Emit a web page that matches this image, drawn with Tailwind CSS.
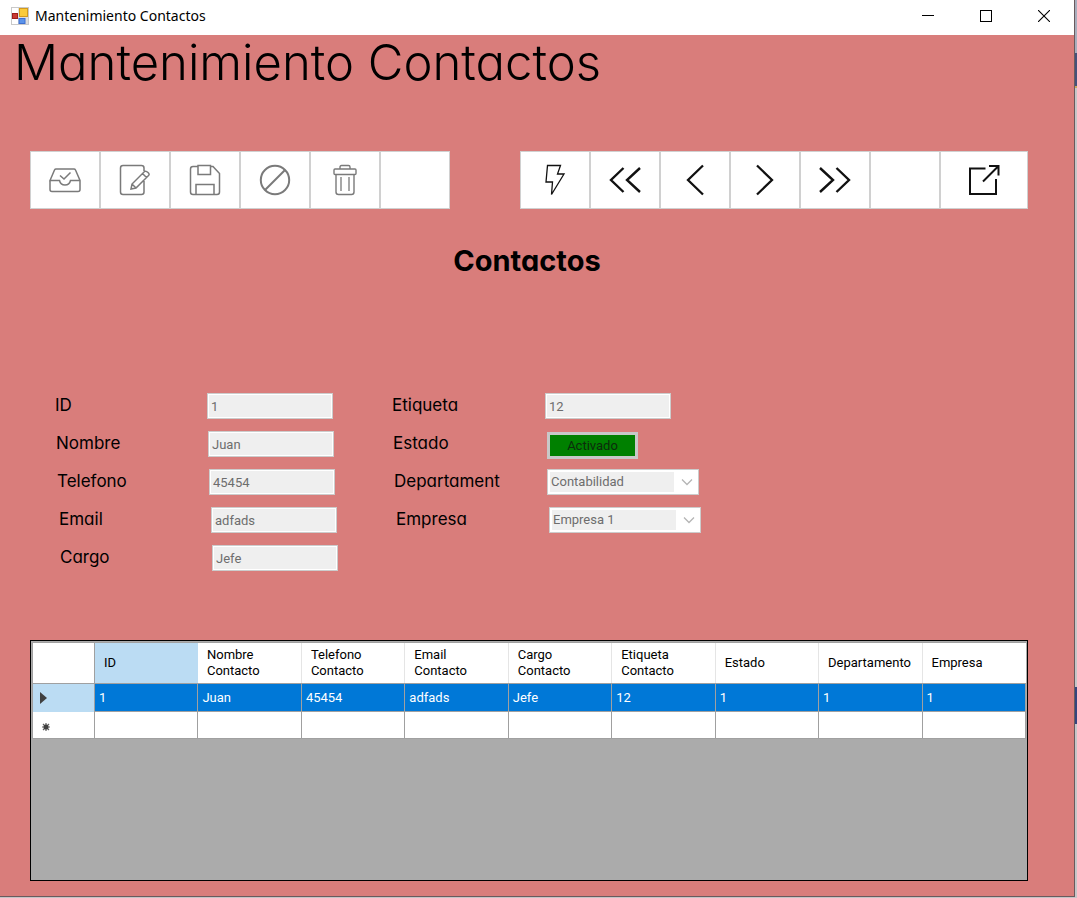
<!DOCTYPE html>
<html lang="es">
<head>
<meta charset="utf-8">
<meta name="viewport" content="width=device-width, initial-scale=1">
<title>Mantenimiento Contactos</title>
<script src="https://cdn.jsdelivr.net/npm/@tailwindcss/browser@4"></script>
</head>
<body class="flex min-h-screen bg-[#c4c4c6] font-['Roboto',sans-serif] text-[13px] text-black">
<div class="flex min-w-0 flex-1 flex-col pb-px">
  <div class="flex flex-1 flex-col border-r border-b border-[#6a5a5d] bg-[#d97d7b]">
    <header class="flex h-[35px] items-center bg-white pl-[11px]">
      <svg class="-mt-1 h-[18px] w-[18px]" viewBox="0 0 18 18">
        <rect x=".5" y=".5" width="17" height="17" fill="#dedede" stroke="#c9c9c9"/>
        <rect x="1" y="1" width="6" height="5" fill="#fff"/><rect x="1" y="12" width="6" height="5" fill="#fff"/>
        <rect x="1.500" y="6.500" width="5" height="5" fill="#c83a32" stroke="#9e1c1c"/>
        <rect x="8.500" y="1.500" width="8" height="8" fill="#fbcb3a" stroke="#d39a1c"/>
        <rect x="8" y="11.500" width="6" height="5" fill="#5b93ea" stroke="#3e6fd0"/>
      </svg>
      <span class="-mt-1 ml-[6px] font-['Noto_Sans',sans-serif] text-[14px]">Mantenimiento Contactos</span>
      <div class="-mt-1 ml-auto flex items-center pr-px">
        <button aria-label="Minimizar" class="flex w-[58px] justify-center"><svg class="h-3 w-3" viewBox="0 0 12 12"><path d="M0 5.500H12" stroke="#000"/></svg></button>
        <button aria-label="Maximizar" class="flex w-[58px] justify-center"><svg class="h-3 w-3" viewBox="0 0 12 12"><rect x=".5" y=".5" width="11" height="11" fill="none" stroke="#000"/></svg></button>
        <button aria-label="Cerrar" class="flex w-[58px] justify-center"><svg class="h-3 w-3" viewBox="0 0 12 12"><path d="M0 0L12 12M12 0L0 12" stroke="#000" stroke-width="1.100"/></svg></button>
      </div>
    </header>

    <main class="flex flex-1 flex-col pr-[46px] pb-[15px] pl-[30px]">
      <h1 class="-ml-4 h-[116px] font-['Inter',sans-serif] text-[49px] leading-[56px] font-light whitespace-nowrap [font-feature-settings:'cv11']">Mantenimiento Contactos</h1>

      <div class="flex justify-between">
        <div class="flex text-[#7a7a7a]">
          <button aria-label="Ingresar" class="flex h-[58px] w-[70px] items-center justify-center border border-[#d0d0d0] bg-white">
            <svg class="h-8 w-8" viewBox="0 0 32 32" fill="none" stroke="currentColor" stroke-width="1.500"><path d="M1 16.500V25.500Q1 27.500 3 27.500H29Q31 27.500 31 25.500V16.500L26.500 6Q26 5 25 5H7Q6 5 5.500 6L1 16.500H10.500Q11.500 21 16 21T21.500 16.500H31M11 11.500L15 15L21.500 8.500"/></svg>
          </button>
          <button aria-label="Modificar" class="flex h-[58px] w-[70px] items-center justify-center border border-[#d0d0d0] bg-white">
            <svg class="h-8 w-8" viewBox="0 0 32 32" fill="none" stroke="currentColor" stroke-width="1.500"><path d="M25 7V4Q25 1.500 22.500 1.500H4Q1.500 1.500 1.500 4V28Q1.500 30.500 4 30.500H22.500Q25 30.500 25 28V17M12 25L13 20L25.500 7.500Q27 6.500 29 8.500T29.500 11.500L17 24ZM13 20L17 24M23.500 9.500L27.500 13.500"/></svg>
          </button>
          <button aria-label="Guardar" class="flex h-[58px] w-[70px] items-center justify-center border border-[#d0d0d0] bg-white">
            <svg class="h-8 w-8" viewBox="0 0 32 32" fill="none" stroke="currentColor" stroke-width="1.500"><path d="M21.500 2.500H24L30.500 9.500V28Q30.500 30.500 28 30.500H4Q1.500 30.500 1.500 28V5Q1.500 2.500 4 2.500H9M9 1.500H21.500V10.500H9ZM7 30.500V20.500H25V30.500"/></svg>
          </button>
          <button aria-label="Cancelar" class="flex h-[58px] w-[70px] items-center justify-center border border-[#d0d0d0] bg-white">
            <svg class="h-8 w-8" viewBox="0 0 32 32" fill="none" stroke="currentColor" stroke-width="2"><circle cx="16" cy="16" r="14.200"/><path d="M6 26L26 6"/></svg>
          </button>
          <button aria-label="Eliminar" class="flex h-[58px] w-[70px] items-center justify-center border border-[#d0d0d0] bg-white">
            <svg class="h-8 w-8" viewBox="0 0 32 32" fill="none" stroke="currentColor" stroke-width="1.400"><rect x="5" y="5" width="22" height="5.500" rx="1"/><path d="M11 5V3Q11 1.500 12.500 1.500H19.500Q21 1.500 21 3V5M7 10.500V28Q7 30.500 9.500 30.500H22.500Q25 30.500 25 28V10.500"/><path d="M12 13V27M20 13V27" stroke="#a8a8a8" stroke-width="2"/></svg>
          </button>
          <button aria-label="Vacío" class="h-[58px] w-[70px] border border-[#d0d0d0] bg-white"></button>
        </div>
        <div class="flex text-[#111]">
          <button aria-label="Refrescar" class="flex h-[58px] w-[70px] items-center justify-center border border-[#d0d0d0] bg-white">
            <svg class="h-8 w-8" viewBox="0 0 32 32" fill="none" stroke="currentColor" stroke-width="1.300"><path d="M8.500 1.500H21.500L18.500 10H25L12.500 30.500L13.500 18H7Z"/></svg>
          </button>
          <button aria-label="Primero" class="flex h-[58px] w-[70px] items-center justify-center border border-[#d0d0d0] bg-white">
            <svg class="h-8 w-8" viewBox="0 0 32 32" fill="none" stroke="currentColor" stroke-width="2.400"><path d="M14.500 4L2 16L14.500 28M31 4L18 16L31 28"/></svg>
          </button>
          <button aria-label="Anterior" class="flex h-[58px] w-[70px] items-center justify-center border border-[#d0d0d0] bg-white">
            <svg class="h-8 w-8" viewBox="0 0 32 32" fill="none" stroke="currentColor" stroke-width="2.300"><path d="M24 1.500L9 16L24 30.500"/></svg>
          </button>
          <button aria-label="Siguiente" class="flex h-[58px] w-[70px] items-center justify-center border border-[#d0d0d0] bg-white">
            <svg class="h-8 w-8" viewBox="0 0 32 32" fill="none" stroke="currentColor" stroke-width="2.300"><path d="M8 1.500L23 16L8 30.500"/></svg>
          </button>
          <button aria-label="Último" class="flex h-[58px] w-[70px] items-center justify-center border border-[#d0d0d0] bg-white">
            <svg class="h-8 w-8" viewBox="0 0 32 32" fill="none" stroke="currentColor" stroke-width="2.400"><path d="M1 4L14 16L1 28M17.500 4L30 16L17.500 28"/></svg>
          </button>
          <button aria-label="Vacío" class="h-[58px] w-[70px] border border-[#d0d0d0] bg-white"></button>
          <button aria-label="Salir" class="flex h-[58px] w-[88px] items-center justify-center border border-[#d0d0d0] bg-white">
            <svg class="h-8 w-8" viewBox="0 0 32 32" fill="none" stroke="currentColor" stroke-width="2"><path d="M17.500 4.500H2V30H28V15M15 17.500L30 2.500M21 2H30.500V11.500"/></svg>
          </button>
        </div>
      </div>

      <h2 class="h-[184px] pt-[33px] pr-1 text-center font-['Inter',sans-serif] text-[29px] leading-[38px] font-bold [font-feature-settings:'cv11']">Contactos</h2>

      <form class="flex pl-[25px]">
        <div class="w-[337px] font-['Inter',sans-serif] text-[17px] [font-feature-settings:'cv11']">
          <div class="flex h-[38px]"><label for="id" class="w-[152px] leading-6">ID</label><input id="id" disabled value="1" class="h-[26px] w-[126px] border border-[#ccc] bg-[#efefef] px-[3px] font-['Roboto',sans-serif] text-[13px] text-[#6d6d6d] ring-1 ring-white ring-inset"></div>
          <div class="flex h-[38px] pl-px"><label for="nombre" class="w-[152px] leading-6">Nombre</label><input id="nombre" disabled value="Juan" class="h-[26px] w-[126px] border border-[#ccc] bg-[#efefef] px-[3px] font-['Roboto',sans-serif] text-[13px] text-[#6d6d6d] ring-1 ring-white ring-inset"></div>
          <div class="flex h-[38px] pl-[2px]"><label for="telefono" class="w-[152px] leading-6">Telefono</label><input id="telefono" disabled value="45454" class="h-[26px] w-[126px] border border-[#ccc] bg-[#efefef] px-[3px] font-['Roboto',sans-serif] text-[13px] text-[#6d6d6d] ring-1 ring-white ring-inset"></div>
          <div class="flex h-[38px] pl-[4px]"><label for="email" class="w-[152px] leading-6">Email</label><input id="email" disabled value="adfads" class="h-[26px] w-[126px] border border-[#ccc] bg-[#efefef] px-[3px] font-['Roboto',sans-serif] text-[13px] text-[#6d6d6d] ring-1 ring-white ring-inset"></div>
          <div class="flex h-[38px] pl-[5px]"><label for="cargo" class="w-[152px] leading-6">Cargo</label><input id="cargo" disabled value="Jefe" class="h-[26px] w-[126px] border border-[#ccc] bg-[#efefef] px-[3px] font-['Roboto',sans-serif] text-[13px] text-[#6d6d6d] ring-1 ring-white ring-inset"></div>
        </div>
        <div class="font-['Inter',sans-serif] text-[17px] [font-feature-settings:'cv11']">
          <div class="flex h-[38px]"><label for="etiqueta" class="w-[153px] leading-6">Etiqueta</label><input id="etiqueta" disabled value="12" class="h-[26px] w-[126px] border border-[#ccc] bg-[#efefef] px-[3px] font-['Roboto',sans-serif] text-[13px] text-[#6d6d6d] ring-1 ring-white ring-inset"></div>
          <div class="flex h-[38px] pl-px"><label for="estado" class="w-[154px] leading-6">Estado</label><button id="estado" type="button" class="mt-px h-[27px] w-[91px] border-3 border-[#c8c8c8] bg-[#008000] font-['Roboto',sans-serif] text-[13px] leading-[21px] text-[#0c2c0c]">Activado</button></div>
          <div class="flex h-[38px] pl-[2px]"><label for="departamento" class="w-[153px] leading-6">Departament</label>
            <div class="relative h-[26px] w-[152px] border border-[#ccc] bg-white p-[2px]">
              <select id="departamento" disabled class="block h-full w-[124px] appearance-none bg-[#efefef] pl-px font-['Roboto',sans-serif] text-[13px] leading-5 text-[#6d6d6d] opacity-100"><option>Contabilidad</option></select>
              <svg class="pointer-events-none absolute top-2 right-[5px] h-2 w-3" viewBox="0 0 12 8" fill="none" stroke="#b5b5b5" stroke-width="1.300"><path d="M1 1.500L6 6.500L11 1.500"/></svg>
            </div>
          </div>
          <div class="flex h-[38px] pl-[4px]"><label for="empresa" class="w-[153px] leading-6">Empresa</label>
            <div class="relative h-[26px] w-[152px] border border-[#ccc] bg-white p-[2px]">
              <select id="empresa" disabled class="block h-full w-[124px] appearance-none bg-[#efefef] pl-px font-['Roboto',sans-serif] text-[13px] leading-5 text-[#6d6d6d] opacity-100"><option>Empresa 1</option></select>
              <svg class="pointer-events-none absolute top-2 right-[5px] h-2 w-3" viewBox="0 0 12 8" fill="none" stroke="#b5b5b5" stroke-width="1.300"><path d="M1 1.500L6 6.500L11 1.500"/></svg>
            </div>
          </div>
        </div>
      </form>

      <div class="mt-[57px] min-h-[200px] flex-1 border border-black bg-[#ababab] p-px">
        <table class="w-full table-fixed border-collapse text-left leading-4">
          <thead>
            <tr class="h-[41px] bg-white">
              <td class="w-[62px] border border-[#a0a0a0]"></td>
              <th class="border-t border-b border-[#a0a0a0] bg-[#bbdcf3] pl-[9px] font-normal">ID</th>
              <th class="border-t border-b border-[#a0a0a0] pl-[9px] font-normal">Nombre<br>Contacto</th>
              <th class="border-t border-b border-l border-t-[#a0a0a0] border-b-[#a0a0a0] border-l-[#e5e5e5] pl-[9px] font-normal">Telefono<br>Contacto</th>
              <th class="border-t border-b border-l border-t-[#a0a0a0] border-b-[#a0a0a0] border-l-[#e5e5e5] pl-[9px] font-normal">Email<br>Contacto</th>
              <th class="border-t border-b border-l border-t-[#a0a0a0] border-b-[#a0a0a0] border-l-[#e5e5e5] pl-[9px] font-normal">Cargo<br>Contacto</th>
              <th class="border-t border-b border-l border-t-[#a0a0a0] border-b-[#a0a0a0] border-l-[#e5e5e5] pl-[9px] font-normal">Etiqueta<br>Contacto</th>
              <th class="border-t border-b border-l border-t-[#a0a0a0] border-b-[#a0a0a0] border-l-[#e5e5e5] pl-[9px] font-normal">Estado</th>
              <th class="border-t border-b border-l border-t-[#a0a0a0] border-b-[#a0a0a0] border-l-[#e5e5e5] pl-[9px] font-normal">Departamento</th>
              <th class="border-t border-b border-l border-t-[#a0a0a0] border-b-[#a0a0a0] border-l-[#e5e5e5] pl-[9px] font-normal">Empresa</th>
            </tr>
          </thead>
          <tbody>
            <tr class="h-[28px] bg-[#0078d7] text-white">
              <td class="border-r border-l border-[#a0a0a0] bg-[#bbdcf3] pl-[7px]"><svg class="h-3 w-[7px]" viewBox="0 0 7 12"><path d="M0 0L7 6L0 12Z" fill="#404040"/></svg></td>
              <td class="border border-[#a0a0a0] pl-1">1</td>
              <td class="border border-[#a0a0a0] pl-1">Juan</td>
              <td class="border border-[#a0a0a0] pl-1">45454</td>
              <td class="border border-[#a0a0a0] pl-1">adfads</td>
              <td class="border border-[#a0a0a0] pl-1">Jefe</td>
              <td class="border border-[#a0a0a0] pl-1">12</td>
              <td class="border border-[#a0a0a0] pl-1">1</td>
              <td class="border border-[#a0a0a0] pl-1">1</td>
              <td class="border border-[#a0a0a0] pl-1">1</td>
            </tr>
            <tr class="h-[27px] bg-white">
              <td class="border-r border-b border-l border-[#a0a0a0] pt-1 pl-[9px]"><svg class="h-2 w-2" viewBox="0 0 8 8"><path d="M4 0V8M0 4H8M1 1L7 7M7 1L1 7" stroke="#606060" stroke-width="1.200"/><circle cx="4" cy="4" r="2.500" fill="#404040"/></svg></td>
              <td class="border border-[#a0a0a0]"></td><td class="border border-[#a0a0a0]"></td><td class="border border-[#a0a0a0]"></td>
              <td class="border border-[#a0a0a0]"></td><td class="border border-[#a0a0a0]"></td><td class="border border-[#a0a0a0]"></td>
              <td class="border border-[#a0a0a0]"></td><td class="border border-[#a0a0a0]"></td><td class="border border-[#a0a0a0]"></td>
            </tr>
          </tbody>
        </table>
      </div>
    </main>
  </div>
</div>
<!-- Edge of the window behind -->
<div class="flex w-[2px] flex-col">
  <div class="h-[53px] bg-[#a9aebd]"></div>
  <div class="h-[33px] bg-[#45517a]"></div>
  <div class="h-[2px] bg-[#c9a85a]"></div>
  <div class="h-[599px] bg-[#c6c6c8]"></div>
  <div class="h-[37px] bg-[#34457d]"></div>
  <div class="flex-1 bg-[#c6c6c8]"></div>
</div>
</body>
</html>
